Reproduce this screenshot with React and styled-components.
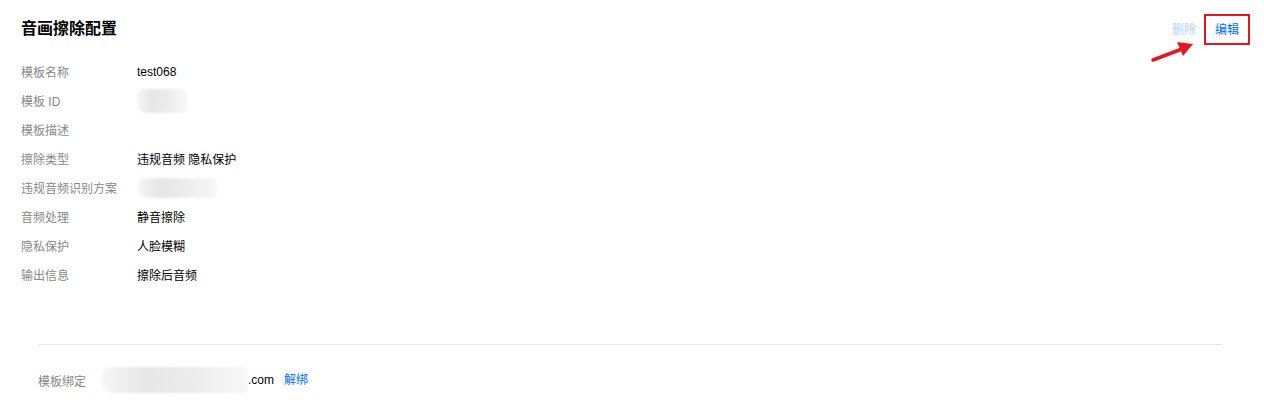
import styled, { createGlobalStyle } from 'styled-components';

const Global = createGlobalStyle`
    html, body {
        margin: 0;
        padding: 0;
        background: #fff;
    }
    body {
        font-family: "Liberation Sans", "Noto Sans CJK SC", Arial, sans-serif;
        font-size: 12px;
        color: #000;
    }
`;

const Page = styled.div`
    width: 1264px;
    height: 419px;
    box-sizing: border-box;
    overflow: hidden;
    display: flex;
    flex-direction: column;
`;

const Section = styled.div`
    padding: 14px 14px 0 21px;
    height: 344px;
    box-sizing: border-box;
`;

const Header = styled.div`
    display: flex;
    justify-content: space-between;
    align-items: flex-start;
    height: 43px;
`;

const Title = styled.h2`
    margin: 5px 0 0;
    font-size: 16px;
    font-weight: bold;
    line-height: 20px;
    color: #000;
`;

const Actions = styled.div`
    position: relative;
    display: flex;
    align-items: center;
    gap: 8px;
`;

const Action = styled.a`
    font-size: 12px;
    line-height: 16px;
    color: ${(p) => (p.$disabled ? '#b3cfff' : '#006eff')};
    cursor: ${(p) => (p.$disabled ? 'not-allowed' : 'pointer')};
`;

const Highlight = styled.span`
    display: inline-flex;
    align-items: center;
    justify-content: center;
    width: 46px;
    height: 31px;
    box-sizing: border-box;
    border: 2px solid #e4171f;
`;

const Arrow = styled.svg`
    position: absolute;
    left: -22px;
    top: 27px;
`;

const List = styled.dl`
    margin: 0;
    display: grid;
    grid-template-columns: 116px 1fr;
    grid-auto-rows: 29px;
    align-items: center;
`;

const Label = styled.dt`
    color: #888;
    font-size: 12px;
`;

const Value = styled.dd`
    margin: 0;
    color: #000;
    font-size: 12px;
    display: flex;
    align-items: center;
`;

const Masked = styled.span`
    display: inline-block;
    width: ${(p) => p.$w}px;
    height: ${(p) => p.$h || 20}px;
    border-radius: 8px 4px 4px 10px;
    background: linear-gradient(90deg, #f6f6f6 0%, #e6e6e6 30%, #ececec 60%, #f8f8f8 100%);
    filter: blur(1px);
`;

const Divider = styled.hr`
    margin: 0 42px 0 38px;
    border: none;
    border-top: 1px solid #e5e5e5;
`;

const Footer = styled.div`
    display: flex;
    align-items: center;
    height: 70px;
    padding-left: 38px;
    font-size: 12px;
`;

const FooterLabel = styled.span`
    color: #888;
    width: 64px;
`;

const Domain = styled.span`
    display: flex;
    align-items: center;
    color: #000;
    margin-right: 10px;
`;

const rows = [
    ['模板名称', 'test068'],
    ['模板 ID', <Masked key="id" $w={50} $h={24} />],
    ['模板描述', ''],
    ['擦除类型', '违规音频 隐私保护'],
    ['违规音频识别方案', <Masked key="plan" $w={80} $h={20} />],
    ['音频处理', '静音擦除'],
    ['隐私保护', '人脸模糊'],
    ['输出信息', '擦除后音频'],
];

const App = () => {
    return (
        <Page>
            <Global />
            <Section>
                <Header>
                    <Title>音画擦除配置</Title>
                    <Actions>
                        <Action $disabled>删除</Action>
                        <Highlight>
                            <Action>编辑</Action>
                        </Highlight>
                        <Arrow width="46" height="22" viewBox="0 0 46 22">
                            <line x1="3" y1="19" x2="32" y2="8" stroke="#e4171f" strokeWidth="3.5" strokeLinecap="round" />
                            <polygon points="43,3 27,1 33,15" fill="#e4171f" />
                        </Arrow>
                    </Actions>
                </Header>
                <List>
                    {rows.map(([k, v]) => (
                        <>
                            <Label key={k}>{k}</Label>
                            <Value key={k + '-v'}>{v}</Value>
                        </>
                    ))}
                </List>
            </Section>
            <Divider />
            <Footer>
                <FooterLabel>模板绑定</FooterLabel>
                <Domain>
                    <Masked $w={146} $h={26} />
                    .com
                </Domain>
                <Action>解绑</Action>
            </Footer>
        </Page>
    );
};

export default App;
